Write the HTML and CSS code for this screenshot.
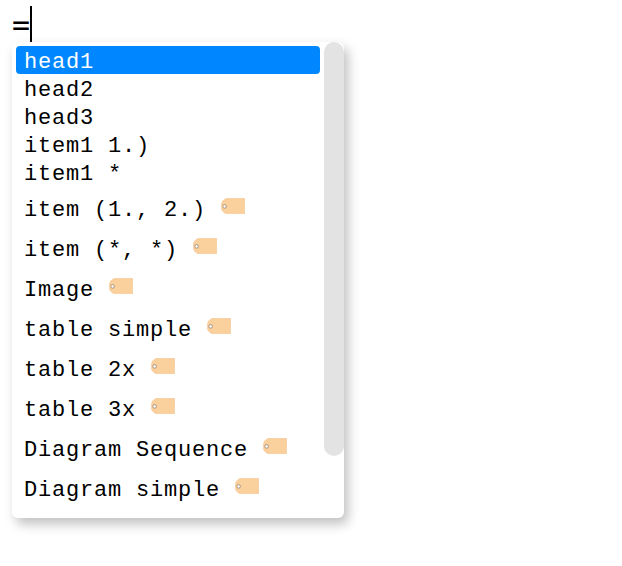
FILE: index.html
```
<!DOCTYPE html>
<html lang="en">
<head>
<meta charset="utf-8">
<title>Editor</title>
<link rel="stylesheet" href="styles.css">
</head>
<body>
<svg class="defs" width="0" height="0" aria-hidden="true">
<symbol id="tag" viewBox="0 0 24 16">
<path d="M5 .6H23.6V15.7H5Q2 14.5 .6 11.5V5Q2 1.8 5 .6Z" fill="#fad09c" stroke="#f5cb9b" stroke-width=".8" stroke-linejoin="round"/>
<circle cx="3.6" cy="8.4" r="1.8" fill="#fff" stroke="#a9927b" stroke-width="1"/>
</symbol>
</svg>
<div class="line"><span class="typed">=</span><span class="cursor"></span></div>
<div class="popup">
<ul class="list">
<li class="active">head1</li>
<li>head2</li>
<li>head3</li>
<li>item1 1.)</li>
<li>item1 *</li>
<li class="tall">item (1., 2.) <svg class="tag"><use href="#tag"/></svg></li>
<li class="tall">item (*, *) <svg class="tag"><use href="#tag"/></svg></li>
<li class="tall">Image <svg class="tag"><use href="#tag"/></svg></li>
<li class="tall">table simple <svg class="tag"><use href="#tag"/></svg></li>
<li class="tall">table 2x <svg class="tag"><use href="#tag"/></svg></li>
<li class="tall">table 3x <svg class="tag"><use href="#tag"/></svg></li>
<li class="tall">Diagram Sequence <svg class="tag"><use href="#tag"/></svg></li>
<li class="tall">Diagram simple <svg class="tag"><use href="#tag"/></svg></li>
</ul>
<div class="scrollbar"></div>
</div>
</body>
</html>
```
FILE: styles.css
```
* { box-sizing: border-box; }
body {
  min-height: 566px;
  margin: 0;
  padding: 6px 0 0 12px;
  background: #fff;
  color: #000;
  font-family: "Courier New", Courier, "Liberation Mono", monospace;
}
.defs { position: absolute; }
.line {
  display: flex;
  height: 36px;
  font-family: "DejaVu Sans Mono", monospace;
  font-size: 30px;
  line-height: 37px;
}
.typed { width: 18px; }
.cursor { width: 2px; background: #000; }
.popup {
  display: flex;
  justify-content: space-between;
  width: 332px;
  height: 476px;
  border-radius: 6px;
  background: #fff;
  box-shadow: 4px 6px 12px rgba(0, 0, 0, .25);
}
.list {
  width: 304px;
  margin: 4px 0 0 4px;
  padding: 0;
  list-style: none;
  font-size: 22px;
  letter-spacing: .8px;
}
.list li {
  display: flex;
  height: 28px;
  padding-left: 8px;
  border-radius: 4px;
  line-height: 33px;
  white-space: pre;
}
.list .active { background: #0087ff; color: #fff; }
.list .tall { height: 40px; line-height: 49px; }
.tag { width: 24px; height: 16px; margin: 12px 0 0 1px; }
.scrollbar {
  width: 20px;
  height: 414px;
  border-radius: 10px;
  background: #e3e3e3;
}
```
